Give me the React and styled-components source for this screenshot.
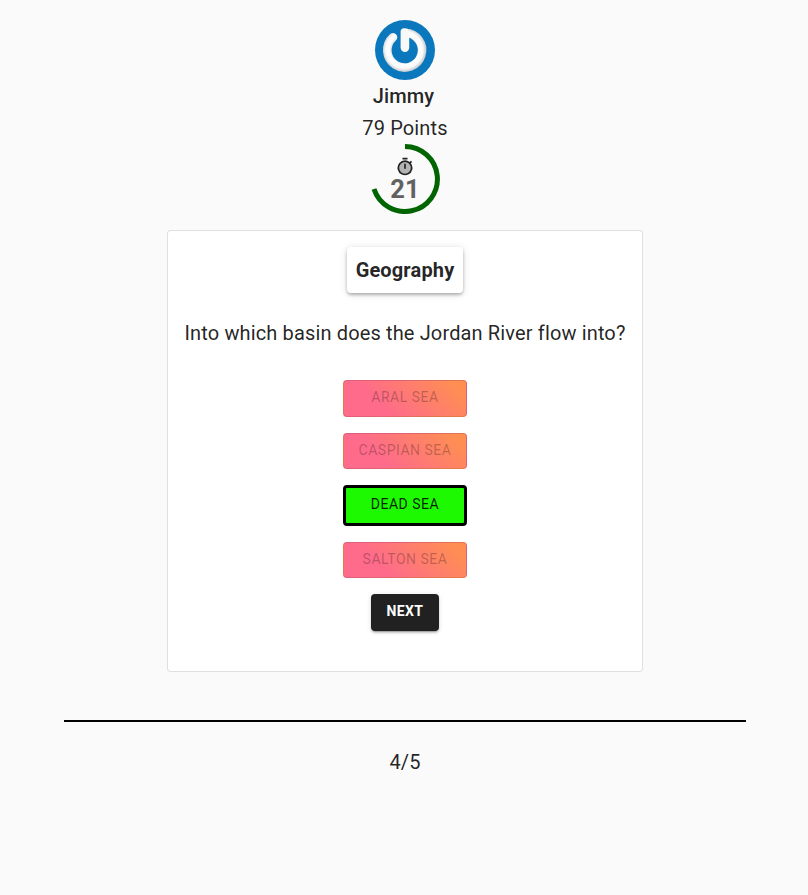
import React from "react";
import styled, { createGlobalStyle } from "styled-components";

const Global = createGlobalStyle`
  *, *::before, *::after { box-sizing: border-box; }
  body { margin: 0; background: #fafafa; color: rgba(0,0,0,0.87); font-family: Roboto, sans-serif; overflow: hidden; }
`;
const Page = styled.main`
  width: 810px; display: flex; flex-direction: column; align-items: center; padding-top: 20px;
`;
const Avatar = styled.svg`width: 60px; height: 60px; display: block;`;
const Name = styled.h6`
  margin: 0; padding-right: 3px; font-size: 20px; font-weight: 500; line-height: 32px; letter-spacing: 0.15px;
`;
const Points = styled.p`
  margin: 0; font-size: 20px; line-height: 32px; letter-spacing: 0.15px;
`;
const Timer = styled.div`
  display: grid; width: 70px; height: 70px; place-items: center;
  & > * { grid-area: 1 / 1; }
`;
const Ring = styled.svg`width: 70px; height: 70px; display: block;`;
const TimerFace = styled.div`
  display: flex; flex-direction: column; align-items: center; color: #616161;
`;
const WatchIcon = styled.svg`width: 20px; height: 20px; display: block;`;
const Seconds = styled.span`font-size: 25.5px; font-weight: 700; height: 24px; line-height: 25px; letter-spacing: 0.15px;`;
const Card = styled.section`
  width: 476px; height: 442px; margin-top: 16px; padding-top: 16px;
  display: flex; flex-direction: column; align-items: center;
  background: #fff; border: 1px solid rgba(0,0,0,0.12); border-radius: 4px;
`;
const Category = styled.div`
  height: 46px; padding: 0 9px; border-radius: 4px; background: #fff;
  font-size: 20px; font-weight: 700; line-height: 46px; letter-spacing: 0.15px;
  box-shadow: 0 2px 4px -1px rgba(0,0,0,.2), 0 2px 3px rgba(0,0,0,.14), 0 1px 8px rgba(0,0,0,.12);
`;
const Question = styled.p`
  margin: 24px 0 31px; font-size: 20px; line-height: 32px; letter-spacing: 0.14px; white-space: nowrap;
`;
const Answers = styled.div`display: flex; flex-direction: column; gap: 16px; width: 124px;`;
const Answer = styled.button`
  height: ${p => (p.$correct ? 40.5 : 36.5)}px; padding: 0 0 ${p => (p.$correct ? 3 : 2)}px;
  border: ${p => (p.$correct ? "3px solid #000" : "1px solid rgba(0,0,0,0.12)")};
  border-radius: 4px;
  background: ${p => (p.$correct ? "#1df900" : "linear-gradient(45deg, #fe6b8b 30%, #ff8e53 90%)")};
  color: ${p => (p.$correct ? "rgba(0,0,0,0.87)" : "rgba(0,0,0,0.26)")};
  font: 400 14px/24px Roboto, sans-serif; letter-spacing: 0.5px; text-transform: uppercase;
`;
const Next = styled.button`
  width: 68px; height: 37px; margin-top: 16px; padding: 0 0 3px; border: 0; border-radius: 4px;
  background: #212121; color: #fff; font: 700 14px/24px Roboto, sans-serif; letter-spacing: 0.4px; text-transform: uppercase;
  box-shadow: 0 3px 1px -2px rgba(0,0,0,.2), 0 2px 2px rgba(0,0,0,.14), 0 1px 5px rgba(0,0,0,.12);
`;
const Divider = styled.hr`width: 682px; height: 2px; border: 0; margin: 48px 0 24px; background: #000;`;

export default function App() {
  return (
    <Page>
      <Global />
      <Avatar viewBox="0 0 60 60">
        <defs>
          <radialGradient id="enamel" gradientUnits="userSpaceOnUse" cx="29.2" cy="29.7" r="22.6">
            <stop offset="0.56" stopColor="#dfe3e6" />
            <stop offset="0.66" stopColor="#fff" />
            <stop offset="0.82" stopColor="#fafafa" />
            <stop offset="1" stopColor="#bcc3c8" />
          </radialGradient>
        </defs>
        <circle cx="30" cy="30" r="30" fill="#0b78bd" />
        <path d="M18 17.3A17.4 17.4 0 1 0 30.2 12.8" fill="none" stroke="url(#enamel)" strokeWidth="8.6" strokeLinecap="round" />
        <path d="M25.6 11.8Q25.6 8.3 29 8.3L33 8.9L34.2 17V27.6A4.3 4.3 0 0 1 25.6 27.6Z" fill="#f8f8f8" />
      </Avatar>
      <Name>Jimmy</Name>
      <Points>79 Points</Points>
      <Timer>
        <Ring viewBox="0 0 70 70"><path d="M35 2.5A32.5 32.5 0 1 1 4 45" fill="none" stroke="#006400" strokeWidth="5" /></Ring>
        <TimerFace>
          <WatchIcon viewBox="0 0 24 24">
            <circle cx="12" cy="13" r="8" fill="#b3b3b3" />
            <path fill="#222" d="M15 1H9v2h6V1zm-4 13h2V8h-2v6zm8.03-6.61 1.42-1.42c-.43-.51-.9-.99-1.41-1.41l-1.42 1.42A8.962 8.962 0 0 0 12 4a9 9 0 1 0 7.03 3.39zM12 20a7 7 0 1 1 0-14 7 7 0 0 1 0 14z" />
          </WatchIcon>
          <Seconds>21</Seconds>
        </TimerFace>
      </Timer>
      <Card>
        <Category>Geography</Category>
        <Question>Into which basin does the Jordan River flow into?</Question>
        <Answers>
          <Answer>Aral Sea</Answer>
          <Answer>Caspian Sea</Answer>
          <Answer $correct>Dead Sea</Answer>
          <Answer>Salton Sea</Answer>
        </Answers>
        <Next>Next</Next>
      </Card>
      <Divider />
      <Points>4/5</Points>
    </Page>
  );
}
